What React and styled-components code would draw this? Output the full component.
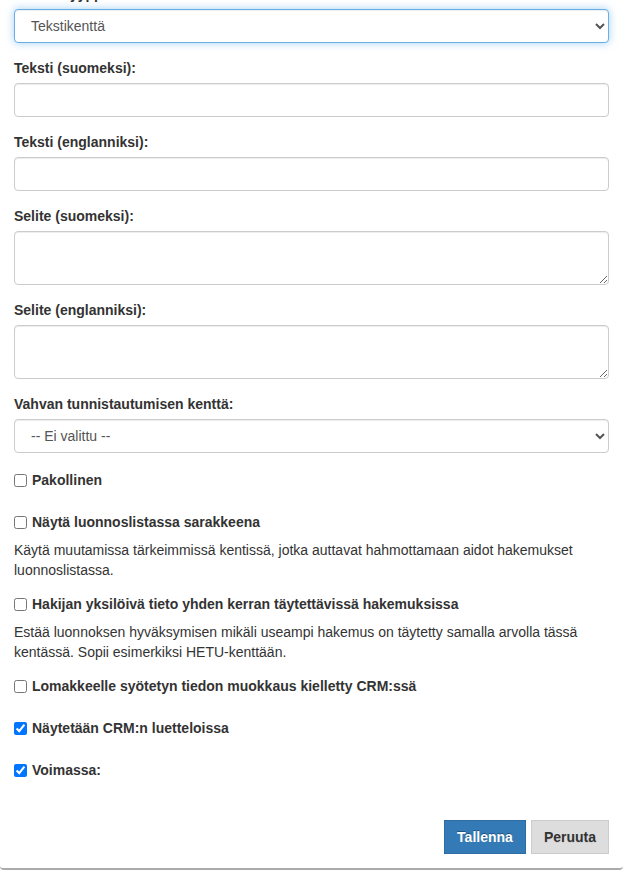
import styled, { createGlobalStyle } from "styled-components";

const GlobalStyle = createGlobalStyle`
  html, body {
    margin: 0;
    padding: 0;
    background: #fff;
  }
  body {
    font-family: "Liberation Sans", Arial, sans-serif;
    font-size: 14px;
    line-height: 20px;
    color: #333;
    overflow: hidden;
  }
`;

const Panel = styled.div`
  height: 868px;
  padding: 0 14px;
  border-bottom: 2px solid #aaa;
  border-radius: 0 0 4px 4px;
  overflow: hidden;
  box-sizing: content-box;
`;

const Form = styled.form`
  margin-top: -16px;
  display: flex;
  flex-direction: column;
`;

const FormGroup = styled.div`
  margin-bottom: 15px;
`;

const Label = styled.label`
  display: block;
  margin-bottom: 5px;
  font-weight: bold;
  line-height: 20px;
`;

const controlBase = `
  display: block;
  width: 100%;
  box-sizing: border-box;
  padding: 6px 12px;
  font-family: "Liberation Sans", Arial, sans-serif;
  font-size: 14px;
  line-height: 20px;
  color: #555;
  background-color: #fff;
  border: 1px solid #ccc;
  border-radius: 4px;
  box-shadow: inset 0 1px 1px rgba(0, 0, 0, 0.075);
  outline: none;
`;

const Input = styled.input`
  ${controlBase}
  height: 34px;
`;

const TextArea = styled.textarea`
  ${controlBase}
  height: 54px;
  resize: vertical;
`;

const Select = styled.select`
  ${controlBase}
  height: 34px;
  padding: 6px 10px 6px 12px;
  ${(p) =>
    p.$focused &&
    `
    border-color: #66afe9;
    box-shadow: inset 0 1px 1px rgba(0, 0, 0, 0.075), 0 0 8px rgba(102, 175, 233, 0.6);
  `}
`;

const Checks = styled.div`
  display: flex;
  flex-direction: column;
  gap: 14px;
  padding-top: 2px;
`;

const CheckBlock = styled.div`
  display: flex;
  flex-direction: column;
  gap: 8px;
`;

const CheckLabel = styled.label`
  display: flex;
  align-items: center;
  font-weight: bold;
  line-height: 20px;
  padding-bottom: ${(p) => (p.$alone ? "8px" : "0")};
`;

const CheckInput = styled.input.attrs({ type: "checkbox" })`
  margin: 0 5px 0 0;
  width: 13px;
  height: 13px;
`;

const Help = styled.div`
  line-height: 20px;
  color: #333;
`;

const Footer = styled.div`
  display: flex;
  justify-content: flex-end;
  gap: 5px;
  margin-top: 32px;
`;

const Button = styled.button`
  height: 34px;
  padding: 6px 12px;
  font-family: "Liberation Sans", Arial, sans-serif;
  font-size: 14px;
  font-weight: bold;
  line-height: 20px;
  border-radius: 0;
  cursor: pointer;
  border: 1px solid ${(p) => (p.$primary ? "#2e6da4" : "#ccc")};
  background: ${(p) => (p.$primary ? "#337ab7" : "#ddd")};
  color: ${(p) => (p.$primary ? "#fff" : "#333")};
  text-shadow: ${(p) =>
    p.$primary ? "0 -1px 0 rgba(0, 0, 0, 0.35)" : "0 1px 0 rgba(0, 0, 0, 0.08)"};
`;

const textFields = [
  { label: "Teksti (suomeksi):", key: "fi" },
  { label: "Teksti (englanniksi):", key: "en" },
  { label: "Selite (suomeksi):", key: "dfi", textarea: true },
  { label: "Selite (englanniksi):", key: "den", textarea: true },
];

const checks = [
  { label: "Pakollinen", key: "required" },
  {
    label: "Näytä luonnoslistassa sarakkeena",
    key: "column",
    help: "Käytä muutamissa tärkeimmissä kentissä, jotka auttavat hahmottamaan aidot hakemukset luonnoslistassa.",
  },
  {
    label: "Hakijan yksilöivä tieto yhden kerran täytettävissä hakemuksissa",
    key: "unique",
    help: "Estää luonnoksen hyväksymisen mikäli useampi hakemus on täytetty samalla arvolla tässä kentässä. Sopii esimerkiksi HETU-kenttään.",
  },
  { label: "Lomakkeelle syötetyn tiedon muokkaus kielletty CRM:ssä", key: "locked" },
  { label: "Näytetään CRM:n luetteloissa", key: "crm", checked: true },
  { label: "Voimassa:", key: "active", checked: true },
];

export default function App() {
  return (
    <>
      <GlobalStyle />
      <Panel>
        <Form onSubmit={(e) => e.preventDefault()}>
          <FormGroup>
            <Label>Kentän tyyppi:</Label>
            <Select $focused defaultValue="text">
              <option value="text">Tekstikenttä</option>
            </Select>
          </FormGroup>
          {textFields.map(({ label, key, textarea }) => (
            <FormGroup key={key}>
              <Label>{label}</Label>
              {textarea ? <TextArea /> : <Input type="text" />}
            </FormGroup>
          ))}
          <FormGroup>
            <Label>Vahvan tunnistautumisen kenttä:</Label>
            <Select defaultValue="">
              <option value="">-- Ei valittu --</option>
            </Select>
          </FormGroup>
          <Checks>
            {checks.map(({ label, key, help, checked }) => (
              <CheckBlock key={key}>
                <CheckLabel $alone={!help}>
                  <CheckInput defaultChecked={checked} />
                  {label}
                </CheckLabel>
                {help && <Help>{help}</Help>}
              </CheckBlock>
            ))}
          </Checks>
          <Footer>
            <Button type="submit" $primary>
              Tallenna
            </Button>
            <Button type="button">Peruuta</Button>
          </Footer>
        </Form>
      </Panel>
    </>
  );
}
